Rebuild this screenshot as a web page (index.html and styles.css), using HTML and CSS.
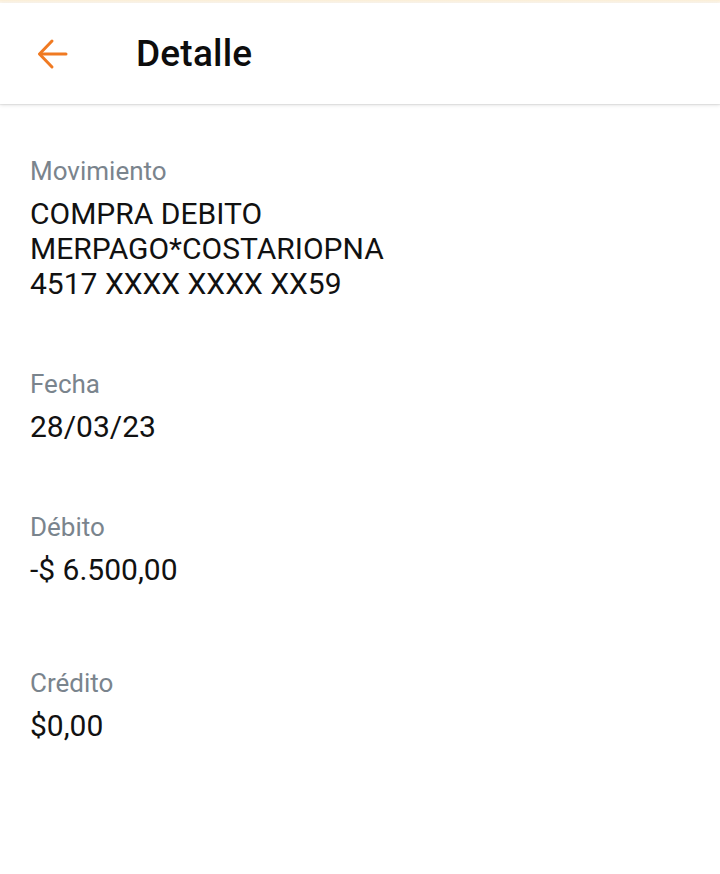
FILE: index.html
```html
<!DOCTYPE html>
<html lang="es">
<head>
<meta charset="utf-8">
<title>Detalle</title>
<link rel="stylesheet" href="styles.css">
</head>
<body>
<div class="status-line"></div>
<header class="app-bar">
  <button class="back" aria-label="Volver">
    <svg width="32" height="32" viewBox="0 0 32 32" fill="none" stroke="#F07A22" stroke-width="3" stroke-linecap="round" stroke-linejoin="round">
      <path d="M30 16H4"/>
      <path d="M16 3L3.5 16L16 29"/>
    </svg>
  </button>
  <h1 class="title">Detalle</h1>
</header>
<main class="content">
  <section class="field field-mov">
    <div class="label">Movimiento</div>
    <div class="value">COMPRA DEBITO<br>MERPAGO*COSTARIOPNA<br>4517 XXXX XXXX XX59</div>
  </section>
  <section class="field">
    <div class="label">Fecha</div>
    <div class="value">28/03/23</div>
  </section>
  <section class="field field-deb">
    <div class="label">Débito</div>
    <div class="value">-$ 6.500,00</div>
  </section>
  <section class="field">
    <div class="label">Crédito</div>
    <div class="value">$0,00</div>
  </section>
</main>
</body>
</html>
```

FILE: styles.css
```css
html, body {
  margin: 0;
  padding: 0;
  background: #ffffff;
}
body {
  font-family: Roboto, "Noto Sans", "Liberation Sans", sans-serif;
  color: #111111;
  width: 720px;
  height: 874px;
  overflow: hidden;
}
.status-line {
  height: 3px;
  background: linear-gradient(#fbeed6, #fffaf2);
}
.app-bar {
  height: 101px;
  display: flex;
  align-items: center;
  background: #ffffff;
  box-shadow: 0 1px 4px rgba(0, 0, 0, 0.12), 0 1px 1px rgba(0, 0, 0, 0.06);
  position: relative;
}
.back {
  border: none;
  background: none;
  padding: 0;
  margin-left: 36px;
  width: 32px;
  height: 32px;
  display: flex;
}
.title {
  margin: 0 0 0 68px;
  font-size: 37px;
  font-weight: 500;
  color: #0d0d0d;
  letter-spacing: 0.2px;
}
.content {
  padding: 52px 30px 0 30px;
}
.field {
  margin-bottom: 68px;
}
.field-deb {
  margin-bottom: 81px;
}
.label {
  font-size: 26px;
  line-height: 30px;
  color: #7a848d;
}
.value {
  margin-top: 10px;
  font-size: 30px;
  line-height: 35px;
  color: #111111;
}
```
